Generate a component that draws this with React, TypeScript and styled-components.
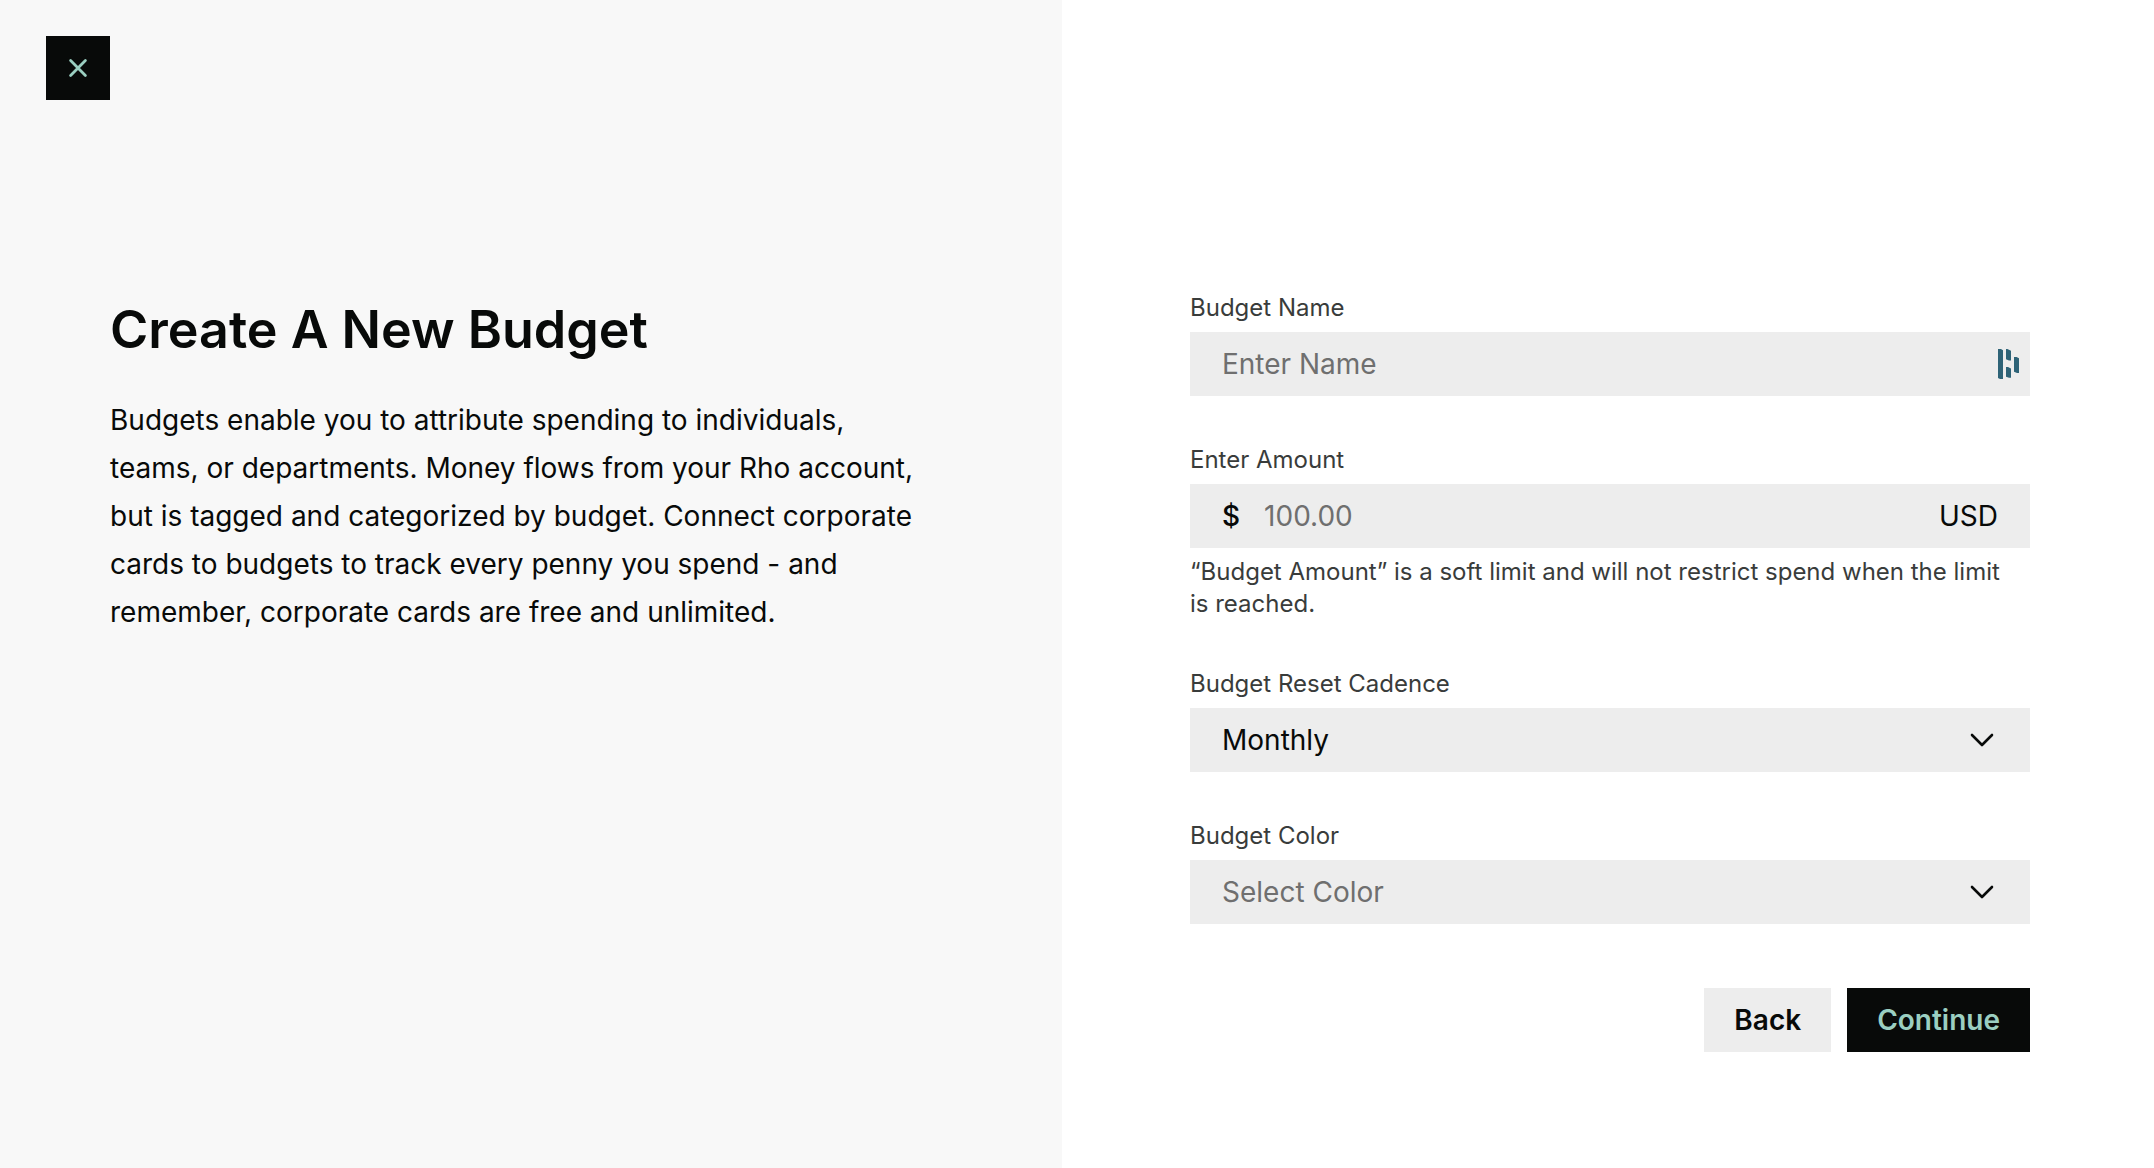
import React from "react";
import styled, { createGlobalStyle, css } from "styled-components";

const color = {
  ink: "#080a09",
  panel: "#f8f8f8",
  field: "#ededed",
  label: "#393c3b",
  placeholder: "#6f6f6f",
  mint: "#9bcfc1",
};

const GlobalStyle = createGlobalStyle`
  *, *::before, *::after { box-sizing: border-box; }
  body {
    margin: 0;
    background: #fff;
    color: ${color.ink};
    font-family: Inter, "Liberation Sans", sans-serif;
    font-size: 28px;
    line-height: 32px;
  }
  button, input, select { font: inherit; color: inherit; }
`;

const Page = styled.div`
  display: flex;
  min-height: 100vh;
`;

const Intro = styled.section`
  flex: 0 1 1062px;
  padding: 36px 110px 48px 46px;
  background: ${color.panel};
`;

const CloseButton = styled.button`
  display: flex;
  align-items: center;
  justify-content: center;
  width: 64px;
  height: 64px;
  padding: 0;
  border: 0;
  background: ${color.ink};
  color: ${color.mint};
  cursor: pointer;
`;

const IntroCopy = styled.div`
  max-width: 890px;
  margin-top: 192px;
  padding-left: 64px;
`;

const Title = styled.h1`
  margin: 0 0 28px;
  font-size: 52px;
  font-weight: 600;
  line-height: 76px;
`;

const Description = styled.p`
  margin: 0;
  line-height: 48px;
`;

const FormPanel = styled.main`
  flex: 1 1 0;
  padding: 292px 124px 48px 128px;
`;

const Form = styled.form`
  display: flex;
  flex-direction: column;
  gap: 48px;
`;

const Field = styled.div`
  display: flex;
  flex-direction: column;
  gap: 8px;
`;

const smallText = css`
  color: ${color.label};
  font-size: 24px;
  line-height: 32px;
`;

const Label = styled.label`
  ${smallText}
`;

const Hint = styled.p`
  ${smallText}
  margin: 0;
  padding-right: 16px;
`;

const Control = styled.div<{ $inset?: number }>`
  display: flex;
  align-items: center;
  height: 64px;
  padding: 0 ${(p) => p.$inset ?? 32}px 0 32px;
  background: ${color.field};
`;

const TextInput = styled.input`
  flex: 1;
  min-width: 0;
  height: 100%;
  padding: 0;
  border: 0;
  outline: 0;
  background: transparent;
  &::placeholder {
    color: ${color.placeholder};
    opacity: 1;
  }
`;

const Currency = styled.span`
  margin-right: 24px;
  font-weight: 500;
`;

const SelectWrap = styled.div`
  display: grid;
  align-items: center;
  height: 64px;
  background: ${color.field};
  & > * { grid-area: 1 / 1; }
  & > svg {
    justify-self: end;
    margin-right: 32px;
    pointer-events: none;
  }
`;

const Select = styled.select<{ $empty: boolean }>`
  width: 100%;
  height: 100%;
  padding: 0 72px 0 32px;
  border: 0;
  border-radius: 0;
  outline: 0;
  appearance: none;
  background: transparent;
  color: ${(p) => (p.$empty ? color.placeholder : color.ink)};
`;

const Actions = styled.div`
  display: flex;
  justify-content: flex-end;
  gap: 16px;
  margin-top: 16px;
`;

const Button = styled.button<{ $primary?: boolean }>`
  height: 64px;
  padding: 0 30px;
  border: 0;
  background: ${(p) => (p.$primary ? color.ink : color.field)};
  color: ${(p) => (p.$primary ? color.mint : color.ink)};
  font-weight: 600;
  cursor: pointer;
`;

const CloseIcon = () => (
  <svg width="20" height="20" viewBox="0 0 20 20" fill="none" stroke="currentColor" strokeWidth="2.8" strokeLinecap="round" aria-hidden="true">
    <path d="M2.6 2.6 17.4 17.4M17.4 2.6 2.6 17.4" />
  </svg>
);

const Chevron = () => (
  <svg width="32" height="32" viewBox="0 0 32 32" fill="none" stroke={color.ink} strokeWidth="2.6" strokeLinecap="round" strokeLinejoin="round" aria-hidden="true">
    <path d="M6 11 16 21 26 11" />
  </svg>
);

const AutofillIcon = () => (
  <svg width="22" height="30" viewBox="0 0 22 30" fill="#2e6377" aria-hidden="true">
    <path d="M0 0h3l2 1.2V30H2L0 29zM8 0h1.4L13 1.8v9.8h-2L8 10.2zM8 18h2l3 1.4v9.4h-2L8 27.8zM16 8h2.6L21 9.2V24h-2l-3-1.2z" />
  </svg>
);

export default function App() {
  const [cadence, setCadence] = React.useState("Monthly");
  const [budgetColor, setBudgetColor] = React.useState("");

  return (
    <>
      <GlobalStyle />
      <Page>
        <Intro>
          <CloseButton type="button" aria-label="Close">
            <CloseIcon />
          </CloseButton>
          <IntroCopy>
            <Title>Create A New Budget</Title>
            <Description>
              Budgets enable you to attribute spending to individuals, teams, or departments. Money
              flows from your Rho account, but is tagged and categorized by budget. Connect
              corporate cards to budgets to track every penny you spend - and remember, corporate
              cards are free and unlimited.
            </Description>
          </IntroCopy>
        </Intro>
        <FormPanel>
          <Form onSubmit={(e) => e.preventDefault()}>
            <Field>
              <Label htmlFor="name">Budget Name</Label>
              <Control $inset={10}>
                <TextInput id="name" type="text" placeholder="Enter Name" />
                <AutofillIcon />
              </Control>
            </Field>
            <Field>
              <Label htmlFor="amount">Enter Amount</Label>
              <Control>
                <Currency>$</Currency>
                <TextInput id="amount" type="text" inputMode="decimal" placeholder="100.00" aria-describedby="amount-hint" />
                <span>USD</span>
              </Control>
              <Hint id="amount-hint">
                “Budget Amount” is a soft limit and will not restrict spend when the limit is
                reached.
              </Hint>
            </Field>
            <Field>
              <Label htmlFor="cadence">Budget Reset Cadence</Label>
              <SelectWrap>
                <Select id="cadence" $empty={false} value={cadence} onChange={(e) => setCadence(e.target.value)}>
                  <option>Monthly</option>
                </Select>
                <Chevron />
              </SelectWrap>
            </Field>
            <Field>
              <Label htmlFor="color">Budget Color</Label>
              <SelectWrap>
                <Select id="color" $empty={!budgetColor} value={budgetColor} onChange={(e) => setBudgetColor(e.target.value)}>
                  <option value="">Select Color</option>
                </Select>
                <Chevron />
              </SelectWrap>
            </Field>
            <Actions>
              <Button type="button">Back</Button>
              <Button type="submit" $primary>
                Continue
              </Button>
            </Actions>
          </Form>
        </FormPanel>
      </Page>
    </>
  );
}
